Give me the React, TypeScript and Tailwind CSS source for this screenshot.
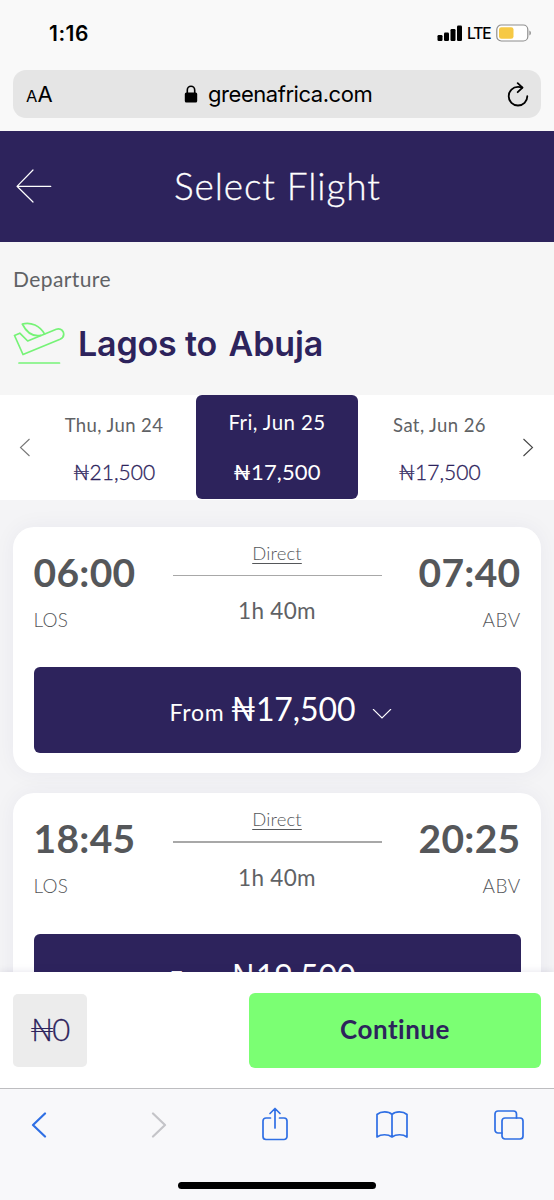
import React from "react";

const brand = "font-['Lato','Noto_Sans',sans-serif]";

function Naira() {
  return <span>₦</span>;
}

function StatusBar() {
  return (
    <div className="flex h-[70px] items-start justify-between pl-[49px] pr-[22px] text-black">
      <span className="mt-[22px] text-[21px] font-semibold leading-[24px] tracking-[0.5px]">1:16</span>
      <div className="mt-[24px] flex h-[18px] items-center">
        <svg className="h-4 w-[26px]" viewBox="0 0 26 16">
          <rect x="0.5" y="10" width="5" height="6" rx="1.2" />
          <rect x="7" y="7.5" width="5" height="8.5" rx="1.2" />
          <rect x="13.5" y="4" width="5" height="12" rx="1.2" />
          <rect x="20" y="0.5" width="5" height="15.5" rx="1.2" />
        </svg>
        <span className="ml-[4px] mt-[2px] w-[25px] text-[15.5px] font-medium leading-[18px] tracking-[-1.1px]">LTE</span>
        <svg className="ml-[4px] h-[18px] w-[36px]" viewBox="0 0 36 18">
          <rect x="0.8" y="1" width="31" height="16" rx="4.5" fill="#fff" stroke="#8e8e8e" strokeWidth="1.2" />
          <rect x="3" y="3.2" width="14.5" height="11.6" rx="2.4" fill="#f6c945" />
          <path d="M33.4 6.5c2 .8 2 4.2 0 5z" fill="#8e8e8e" />
        </svg>
      </div>
    </div>
  );
}

function AddressBar() {
  return (
    <div className="mx-[13px] flex h-12 items-center rounded-[13px] bg-[#e5e5e5] text-black">
      <div className="mt-[2px] flex w-[171px] items-baseline pl-[13px] leading-[28px]">
        <span className="text-[16.5px]">A</span>
        <span className="text-[22px]">A</span>
      </div>
      <svg className="h-[18px] w-[14px]" viewBox="0 0 14 18">
        <rect x="0.8" y="7.6" width="12.4" height="10" rx="1.5" />
        <path d="M3.3 8V5a3.7 3.7 0 0 1 7.4 0v3" fill="none" stroke="#000" strokeWidth="1.6" />
      </svg>
      <span className="ml-[10px] text-[22px] leading-[28px] tracking-[-0.45px]">greenafrica.com</span>
      <svg className="ml-auto mr-[12px] h-[25px] w-[22px]" viewBox="0 0 22 25" fill="none" stroke="#000" strokeWidth="1.8" strokeLinecap="round" strokeLinejoin="round">
        <path d="M20.3 14.2a9.3 9.3 0 1 1-9.3-9.3c1.6 0 3 .2 4.2.7" />
        <path d="M10.7 1.2l4.8 4.4-4.8 4.6" />
      </svg>
    </div>
  );
}

function Header() {
  return (
    <header className="flex h-[111px] items-center bg-[#2d235c] pl-[16px] text-white">
      <svg className="-mt-[2px] h-[34px] w-[36px]" viewBox="0 0 36 34" fill="none" stroke="#fff" strokeWidth="1.2" strokeLinecap="round" strokeLinejoin="round">
        <path d="M17 1L1 17.3 17 33M1 17.3h33.8" />
      </svg>
      <h1 className="-mt-[1px] ml-[122px] text-[37px] font-light leading-[44px] tracking-[0.9px] [-webkit-text-stroke:0.3px_white]">Select Flight</h1>
    </header>
  );
}

function Route() {
  return (
    <section className="h-[153px] bg-[#f6f6f6] pl-[13px] pt-[23px]">
      <p className="text-[21px] leading-[28px] tracking-[0.4px] text-[#606265]">Departure</p>
      <div className="mt-[28px] flex h-[46px] items-center">
        <svg className="h-[46px] w-[52px]" viewBox="0 0 52 46" fill="none" stroke="#76f377" strokeWidth="1.7" strokeLinecap="round" strokeLinejoin="round">
          <path d="M1.5 14.5l5.3-2.3L14.7 20 43.3 8.3c3-1 6 .2 7 2.8 1 3-.3 5.8-3.2 7.1L10 33.5z" />
          <path d="M31.5 13C27 5 18 .5 9.3 3c3.5 7 9.500 13 18.500 11.300" />
          <path d="M6 42h40.5" />
        </svg>
        <h2 className="ml-[13px] font-['Inter',sans-serif] text-[34px] font-semibold leading-[44px] tracking-[-0.15px] text-[#2d235c]">
          Lagos to <span className="ml-[3px]">Abuja</span>
        </h2>
      </div>
    </section>
  );
}

function Chevron({ flip = false, color }: { flip?: boolean; color: string }) {
  return (
    <svg className="h-[19px] w-[12px]" viewBox="0 0 12 19" fill="none" stroke={color} strokeWidth="1.1">
      <path d={flip ? "M1.5 1l9 8.5-9 8.5" : "M10.5 1l-9 8.5 9 8.5"} />
    </svg>
  );
}

function DateStrip() {
  return (
    <section className="flex h-[105px] items-center bg-white">
      <div className="flex w-[32px] justify-end pr-[1px]"><Chevron color="#777" /></div>
      <div className="flex w-[164px] flex-col items-center pt-[1px]">
        <span className="text-[18.5px] leading-[24px] tracking-[0.4px] text-[#606265]">Thu, Jun 24</span>
        <span className="mt-[23px] text-[21px] font-light leading-[24px] text-[#2d235c] [-webkit-text-stroke:0.3px_#2d235c]"><Naira />21,500</span>
      </div>
      <div className="flex h-[104px] w-[162px] flex-col items-center self-start rounded-[6px] bg-[#2d235c] pt-[15px] text-white">
        <span className="text-[20.5px] leading-[24px] tracking-[0.4px]">Fri, Jun 25</span>
        <span className="mt-[26px] text-[22px] leading-[24px] tracking-[0.15px]"><Naira />17,500</span>
      </div>
      <div className="flex w-[163px] flex-col items-center pt-[1px]">
        <span className="text-[18.5px] leading-[24px] tracking-[0.4px] text-[#606265]">Sat, Jun 26</span>
        <span className="mt-[23px] text-[21px] font-light leading-[24px] text-[#2d235c] [-webkit-text-stroke:0.3px_#2d235c]"><Naira />17,500</span>
      </div>
      <div className="ml-[1px]"><Chevron flip color="#444" /></div>
    </section>
  );
}

type Flight = { from: string; to: string; price: string };

function FlightCard({ from, to, price }: Flight) {
  return (
    <article className="h-[246px] shrink-0 rounded-[21px] bg-white px-[20.5px] shadow-[0_0_22px_rgba(45,35,92,0.05)]">
      <div className="flex h-[140.5px] text-[#55575a]">
        <div className="w-[139px] pt-[21px]">
          <p className="text-[39px] font-bold leading-[48px] tracking-[0.3px]">{from}</p>
          <p className="mt-[12px] text-[19px] font-light leading-[24px] tracking-[0.2px]">LOS</p>
        </div>
        <div className="flex w-[209px] flex-col items-center pt-[14px]">
          <span className="text-[18.5px] font-light leading-[24px] tracking-[0.15px] underline underline-offset-[3px]">Direct</span>
          <div className="mt-[10px] h-[1.5px] w-full bg-[#a8a8a8]" />
          <span className="mt-[21px] text-[22.5px] leading-[28px] tracking-[0.3px] text-[#606265]">1h 40m</span>
        </div>
        <div className="flex-1 pt-[21px] text-right">
          <p className="text-[39px] font-bold leading-[48px] tracking-[0.3px]">{to}</p>
          <p className="mt-[12px] text-[19px] font-light leading-[24px] tracking-[0.4px]">ABV</p>
        </div>
      </div>
      <button className="flex h-[85.5px] w-full items-baseline rounded-[6px] bg-[#2d235c] pl-[136px] pt-[22px] text-white">
        <span className="w-[61px] text-left text-[23px] leading-[40px] tracking-[0.8px]">From</span>
        <span className="w-[124px] text-left text-[32px] leading-[40px] tracking-[-0.1px]"><Naira />{price}</span>
        <svg className="ml-[17px] h-[12px] w-[20px]" viewBox="0 0 20 12" fill="none" stroke="#fff" strokeWidth="1.1">
          <path d="M1 0l9 9 9-9" />
        </svg>
      </button>
    </article>
  );
}

function CheckoutBar() {
  return (
    <section className="z-10 flex h-[116px] items-start justify-between bg-white px-[13px] pt-[21px] text-[#2d235c] shadow-[0_0_8px_rgba(45,35,92,0.12)]">
      <div className="mt-[1px] flex h-[73px] w-[74px] items-center justify-center rounded-[5px] bg-[#ececec] pb-[3px] pr-[2px] text-[31px] font-light tracking-[-2px] [-webkit-text-stroke:0.3px_#2d235c]"><Naira />0</div>
      <button className="h-[75px] w-[292px] rounded-[6px] bg-[#7bff73] pb-[2px] text-[26px] font-bold tracking-[0.5px]">Continue</button>
    </section>
  );
}

function BrowserToolbar() {
  const s = { fill: "none", stroke: "#2f6fe4", strokeLinecap: "round", strokeLinejoin: "round" } as const;
  return (
    <nav className="z-20 flex h-[112px] flex-col items-center border-t border-[#bdbdc0] bg-[#f8f8fa]">
      <div className="flex h-[71px] w-full items-center pl-[31px]">
        <svg className="h-[26px] w-4" viewBox="0 0 16 26" {...s} strokeWidth="2.2"><path d="M14 1.5L2 13l12 11.5" /></svg>
        <svg className="ml-[104px] h-[26px] w-4" viewBox="0 0 16 26" {...s} stroke="#c4c4c8" strokeWidth="2.2"><path d="M2 1.5L14 13 2 24.5" /></svg>
        <svg className="-mt-[2px] ml-[95px] h-[34px] w-[26px]" viewBox="0 0 26 34" {...s} strokeWidth="1.7">
          <path d="M8.5 11H4a3 3 0 0 0-3 3v15.5a3 3 0 0 0 3 3h18a3 3 0 0 0 3-3V14a3 3 0 0 0-3-3h-4.5M13 21V1.5M8 6.5l5-5 5 5" />
        </svg>
        <svg className="ml-[88px] h-[30px] w-[32px]" viewBox="0 0 32 30" {...s} strokeWidth="1.7">
          <path d="M16 4.5C12.5 1 5 1 1 4.5V27c4-3 11-3 15 0 4-3 11-3 15 0V4.5C27 1 19.5 1 16 4.5zV27" />
        </svg>
        <svg className="ml-[86px] h-[30px] w-[30px]" viewBox="0 0 30 30" {...s} strokeWidth="1.7">
          <path d="M8 23H4a3 3 0 0 1-3-3V4a3 3 0 0 1 3-3h15.5a3 3 0 0 1 3 3v4" />
          <rect x="8" y="8" width="21" height="21" rx="3" />
        </svg>
      </div>
      <div className="mt-[22px] h-[7px] w-[198px] rounded-full bg-black" />
    </nav>
  );
}

export default function App() {
  return (
    <div className={`flex h-[1200px] w-[554px] flex-col overflow-hidden bg-[#f4f4f6] ${brand}`}>
      <div className="h-[131px] shrink-0 bg-[#f9f9f9] font-['Inter',sans-serif]">
        <StatusBar />
        <AddressBar />
      </div>
      <Header />
      <Route />
      <DateStrip />
      <main className="flex h-[472px] shrink-0 flex-col gap-[20.5px] overflow-hidden bg-[#f4f4f6] px-[13px] pt-[26.5px]">
        <FlightCard from="06:00" to="07:40" price="17,500" />
        <FlightCard from="18:45" to="20:25" price="19,500" />
      </main>
      <CheckoutBar />
      <BrowserToolbar />
    </div>
  );
}
